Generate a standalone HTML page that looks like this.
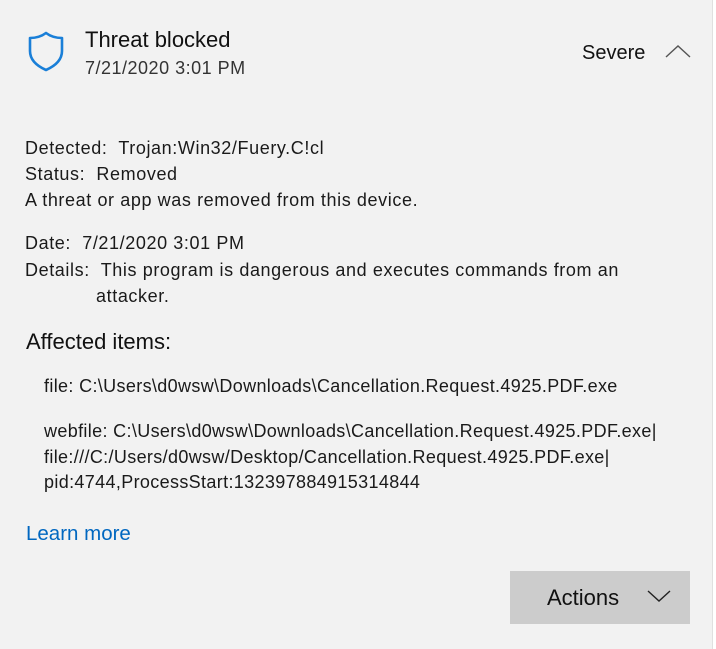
<!DOCTYPE html>
<html><head><style>
html,body{margin:0;padding:0}
body{width:716px;height:649px;background:#fff;position:relative;overflow:hidden;font-family:"Liberation Sans",sans-serif;color:#1a1a1a}
.p{position:absolute;left:0;top:0;width:712px;height:649px;background:#f2f2f2;border-right:1px solid #e0e0e0}
.t{position:absolute;white-space:nowrap;font-size:18px;letter-spacing:0.6px;line-height:22px}
</style></head><body>
<div class="p"></div>
<svg style="position:absolute;left:26px;top:31px" width="40" height="42" viewBox="0 0 40 42">
<path d="M4 7 C11 7 16 5 20 2 C24 5 29 7 36 7 L36 20 C36 29 29 35 20 39 C11 35 4 29 4 20 Z" fill="none" stroke="#1a7fd8" stroke-width="2.6" stroke-linejoin="round"/>
</svg>
<div class="t" style="left:85px;top:27px;font-size:22px;letter-spacing:0;line-height:26px;color:#111">Threat blocked</div>
<div class="t" style="left:85px;top:57px;font-size:18px;letter-spacing:0.5px;color:#333">7/21/2020 3:01 PM</div>
<div class="t" style="left:582px;top:41px;font-size:20px;letter-spacing:0;line-height:24px;color:#111">Severe</div>
<svg style="position:absolute;left:664px;top:42px" width="28" height="18"><path d="M2 15 L14 4 L26 15" fill="none" stroke="#555" stroke-width="1.4"/></svg>
<div class="t" style="left:25px;top:137px">Detected:&nbsp; Trojan:Win32/Fuery.C!cl</div>
<div class="t" style="left:25px;top:163px">Status:&nbsp; Removed</div>
<div class="t" style="left:25px;top:189px">A threat or app was removed from this device.</div>
<div class="t" style="left:25px;top:232px">Date:&nbsp; 7/21/2020 3:01 PM</div>
<div class="t" style="left:25px;top:259px">Details:&nbsp; This program is dangerous and executes commands from an</div>
<div class="t" style="left:96px;top:285px">attacker.</div>
<div class="t" style="left:26px;top:330px;font-size:22px;letter-spacing:0;line-height:24px;color:#111">Affected items:</div>
<div class="t" style="left:44px;top:375px;letter-spacing:0.35px">file: C:\Users\d0wsw\Downloads\Cancellation.Request.4925.PDF.exe</div>
<div class="t" style="left:44px;top:420px;letter-spacing:0.35px">webfile: C:\Users\d0wsw\Downloads\Cancellation.Request.4925.PDF.exe|</div>
<div class="t" style="left:44px;top:446px;letter-spacing:0.35px">file:///C:/Users/d0wsw/Desktop/Cancellation.Request.4925.PDF.exe|</div>
<div class="t" style="left:44px;top:471px;letter-spacing:0.35px">pid:4744,ProcessStart:132397884915314844</div>
<div class="t" style="left:26px;top:522px;font-size:20.5px;letter-spacing:0;line-height:24px;color:#0067c0">Learn more</div>
<div style="position:absolute;left:510px;top:571px;width:180px;height:53px;background:#cccccc"></div>
<div class="t" style="left:547px;top:586px;font-size:22px;letter-spacing:0;line-height:24px;color:#111">Actions</div>
<svg style="position:absolute;left:646px;top:588px" width="26" height="16"><path d="M2 3 L13 13 L24 3" fill="none" stroke="#222" stroke-width="1.4"/></svg>
</body></html>
